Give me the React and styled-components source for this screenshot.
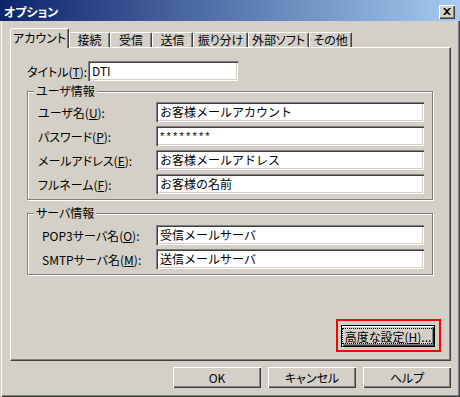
import React from 'react';
import styled, { createGlobalStyle } from 'styled-components';

const GlobalStyle = createGlobalStyle`
  html, body {
    margin: 0;
    padding: 0;
    background: #d4d0c8;
  }
  body {
    font-family: "Noto Sans CJK JP", "Liberation Sans", sans-serif;
    font-size: 12px;
    color: #000;
  }
`;

const Window = styled.div`
  width: 460px;
  height: 397px;
  box-sizing: border-box;
  display: flex;
  flex-direction: column;
  background: #d4d0c8;
  box-shadow: inset 1px 1px #d4d0c8, inset 2px 2px #fff,
    inset -1px -1px #404040, inset -2px -2px #808080;
`;

const TitleBar = styled.div`
  height: 21px;
  box-sizing: border-box;
  padding: 2px 5px 0 4px;
  display: flex;
  align-items: center;
  justify-content: space-between;
  background: linear-gradient(to right, #0a246a, #a6caf0);
  color: #fff;
  font-weight: bold;
  font-feature-settings: "palt";
  line-height: 14px;
`;

const CloseButton = styled.div`
  width: 16px;
  height: 14px;
  box-sizing: border-box;
  display: flex;
  align-items: center;
  justify-content: center;
  background: #d4d0c8;
  box-shadow: inset 1px 1px #fff, inset -1px -1px #404040,
    inset -2px -2px #808080;
`;

const Body = styled.div`
  flex: 1;
  display: flex;
  flex-direction: column;
  padding: 7px 9px 0 10px;
`;

const TabStrip = styled.div`
  display: flex;
  align-items: flex-end;
  height: 19px;
`;

const Tab = styled.div`
  position: relative;
  z-index: ${p => (p.$active ? 2 : 0)};
  width: ${p => p.$w}px;
  height: ${p => (p.$active ? 20 : 15)}px;
  margin-bottom: ${p => (p.$active ? -1 : 0)}px;
  box-sizing: border-box;
  display: flex;
  align-items: ${p => (p.$active ? 'flex-start' : 'center')};
  padding-top: ${p => (p.$active ? 2 : 0)}px;
  justify-content: center;
  background: #d4d0c8;
  border-top: 1px solid #fff;
  border-left: 1px solid #fff;
  border-right: 1px solid #404040;
  border-radius: 2px 2px 0 0;
  box-shadow: inset -1px 0 #808080;
  font-feature-settings: "palt";
  line-height: 14px;
  white-space: nowrap;
`;

const Page = styled.div`
  position: relative;
  z-index: 1;
  width: 441px;
  height: 314px;
  box-sizing: border-box;
  display: flex;
  flex-direction: column;
  padding: 13px 16px 0 16px;
  border-top: 1px solid #fff;
  border-left: 1px solid #fff;
  border-right: 1px solid #404040;
  border-bottom: 1px solid #404040;
  box-shadow: inset -1px -1px #808080;
`;

const Row = styled.div`
  display: flex;
  align-items: center;
  height: 20px;
`;

const Label = styled.div`
  width: ${p => p.$w}px;
  flex-shrink: 0;
  font-feature-settings: "palt";
  white-space: nowrap;
  line-height: 14px;
  padding-top: 1px;

  u {
    text-decoration: underline;
    text-underline-offset: 1px;
  }
`;

const Field = styled.div`
  width: ${p => p.$w}px;
  height: 20px;
  box-sizing: border-box;
  padding: 2px 0 0 4px;
  background: #fff;
  box-shadow: inset 1px 1px #808080, inset 2px 2px #404040,
    inset -1px -1px #fff, inset -2px -2px #d4d0c8;
  line-height: 16px;
  white-space: nowrap;
  overflow: hidden;
`;

const Secret = styled.span`
  font-family: "Liberation Sans", sans-serif;
  font-size: 11px;
  letter-spacing: 2.2px;
  position: relative;
  top: -1px;
`;

const Group = styled.div`
  margin-top: ${p => p.$top}px;
  width: 406px;
  box-sizing: border-box;
  border: 1px solid #808080;
  box-shadow: inset 1px 1px #fff, 1px 1px #fff;
  padding: 0 8px 5px ${p => p.$left}px;
`;

const Legend = styled.div`
  width: fit-content;
  height: 14px;
  line-height: 14px;
  margin: -8px 0 ${p => p.$after}px -${p => p.$left - 6}px;
  padding: 0 2px;
  background: #d4d0c8;
  font-feature-settings: "palt";
`;

const Rows = styled.div`
  display: flex;
  flex-direction: column;
  gap: 4px;
`;

const Highlight = styled.div`
  margin: auto -7px 8px auto;
  border: 2px solid #ff0000;
  padding: 4px 4px 3px 3px;
`;

const Button = styled.div`
  width: ${p => p.$w}px;
  height: ${p => p.$h}px;
  box-sizing: border-box;
  display: flex;
  align-items: center;
  justify-content: center;
  background: #d4d0c8;
  box-shadow: inset 1px 1px #fff, inset -1px -1px #404040,
    inset -2px -2px #808080;
  font-feature-settings: "palt";
  line-height: 14px;
  white-space: nowrap;

  u {
    text-decoration: underline;
    text-underline-offset: 1px;
  }
`;

const DefaultButton = styled(Button)`
  border: 1px solid #000;
`;

const Focus = styled.span`
  padding: 1px 2px 0 2px;
  outline: 1px dotted #000;
  outline-offset: 0;
  line-height: 13px;
`;

const ButtonBar = styled.div`
  display: flex;
  justify-content: flex-end;
  gap: 7px;
  margin-top: 6px;
`;

const tabs = [
  ['アカウント', 59],
  ['接続', 41],
  ['受信', 42],
  ['送信', 41],
  ['振り分け', 55],
  ['外部ソフト', 61],
  ['その他', 43],
];

const userRows = [
  ['ユーザ名', 'U', 'お客様メールアカウント'],
  ['パスワード', 'P', null],
  ['メールアドレス', 'E', 'お客様メールアドレス'],
  ['フルネーム', 'F', 'お客様の名前'],
];

const serverRows = [
  ['POP3サーバ名', 'O', '受信メールサーバ'],
  ['SMTPサーバ名', 'M', '送信メールサーバ'],
];

const CloseIcon = () => (
  <svg width="8" height="7" viewBox="0 0 8 7">
    <path d="M0 0h2l2 2 2-2h2L5 3.5 8 7H6L4 5 2 7H0l3-3.5z" fill="#000" />
  </svg>
);

const App = () => (
  <>
    <GlobalStyle />
    <Window>
      <TitleBar>
        <span>オプション</span>
        <CloseButton>
          <CloseIcon />
        </CloseButton>
      </TitleBar>
      <Body>
        <TabStrip>
          {tabs.map(([name, w], i) => (
            <Tab key={name} $w={w} $active={i === 0}>
              {name}
            </Tab>
          ))}
        </TabStrip>
        <Page>
          <Row>
            <Label $w={61}>
              タイトル(<u>T</u>):
            </Label>
            <Field $w={150}>DTI</Field>
          </Row>

          <Group $top={10} $left={10}>
            <Legend $after={4} $left={10}>ユーザ情報</Legend>
            <Rows>
              {userRows.map(([label, key, value]) => (
                <Row key={key}>
                  <Label $w={118}>
                    {label}(<u>{key}</u>):
                  </Label>
                  <Field $w={268}>
                    {value || <Secret>********</Secret>}
                  </Field>
                </Row>
              ))}
            </Rows>
          </Group>

          <Group $top={13} $left={14}>
            <Legend $after={5} $left={14}>サーバ情報</Legend>
            <Rows>
              {serverRows.map(([label, key, value]) => (
                <Row key={key}>
                  <Label $w={114}>
                    {label}(<u>{key}</u>):
                  </Label>
                  <Field $w={268}>{value}</Field>
                </Row>
              ))}
            </Rows>
          </Group>

          <Highlight>
            <DefaultButton $w={94} $h={22}>
              <Focus>
                高度な設定(<u>H</u>)...
              </Focus>
            </DefaultButton>
          </Highlight>
        </Page>
        <ButtonBar>
          <Button $w={88} $h={21}>OK</Button>
          <Button $w={88} $h={21}>キャンセル</Button>
          <Button $w={88} $h={21}>ヘルプ</Button>
        </ButtonBar>
      </Body>
    </Window>
  </>
);

export default App;
